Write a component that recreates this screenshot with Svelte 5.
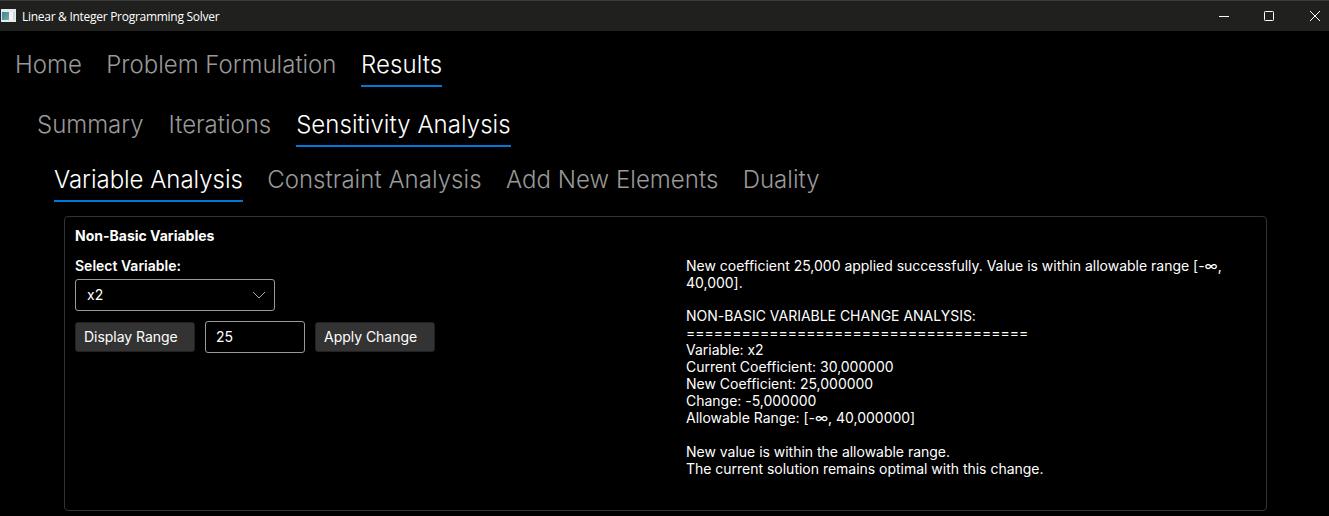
<script>
  const main = ['Home', 'Problem Formulation', 'Results'];
  const sub = ['Summary', 'Iterations', 'Sensitivity Analysis'];
  const third = ['Variable Analysis', 'Constraint Analysis', 'Add New Elements', 'Duality'];
  const rows = [
    { items: main, active: 2, cls: 'r1' },
    { items: sub, active: 2, cls: 'r2' },
    { items: third, active: 0, cls: 'r3' }
  ];
  const message = 'New coefficient 25,000 applied successfully. Value is within allowable range [-∞, 40,000].';
  const report = `NON-BASIC VARIABLE CHANGE ANALYSIS:
=====================================
Variable: x2
Current Coefficient: 30,000000
New Coefficient: 25,000000
Change: -5,000000
Allowable Range: [-∞, 40,000000]

New value is within the allowable range.
The current solution remains optimal with this change.`;
</script>

<div class="window">
  <header>
    <svg class="logo" width="15" height="13" viewBox="0 0 15 13">
      <defs>
        <linearGradient id="pane" x1="0" y1="0" x2="1" y2="1">
          <stop offset="0" stop-color="#3f7fb0" />
          <stop offset="1" stop-color="#6fb58a" />
        </linearGradient>
      </defs>
      <rect width="15" height="13" fill="#e6eaed" />
      <rect x="1" y="3" width="7" height="8" fill="url(#pane)" />
      <rect x="8" y="3" width="4" height="8" fill="#f3f3f3" />
      <rect x="12" y="3" width="2" height="8" fill="#d4d8dc" />
    </svg>
    <span>Linear &amp; Integer Programming Solver</span>
    <svg class="controls" width="110" height="30" viewBox="0 0 110 30" fill="none" stroke="#fff">
      <path d="M0 15.5H10" />
      <rect x="45.5" y="10.5" width="9" height="9" rx="0.8" />
      <path d="M91 10L101 20M101 10L91 20" />
    </svg>
  </header>
  {#each rows as row}
    <nav class={row.cls}>
      {#each row.items as item, i}
        <span class="tab" class:active={i === row.active}>{item}</span>
      {/each}
    </nav>
  {/each}
  <main>
    <section class="form">
      <h2>Non-Basic Variables</h2>
      <div class="label">Select Variable:</div>
      <div class="select">x2
        <svg width="14" height="8" viewBox="0 0 14 8" fill="none" stroke="#aaa"><path d="M1 1L7 7L13 1" /></svg>
      </div>
      <div class="actions">
        <button>Display Range</button>
        <div class="input">25</div>
        <button>Apply Change</button>
      </div>
    </section>
    <section class="output">
      <p>{message}</p>
      <p>{report}</p>
    </section>
  </main>
</div>

<style>
  :global(body) { margin: 0; background: #000; }
  .window { width: 1329px; height: 516px; background: #000; color: #fff; font-family: Inter, sans-serif; font-size: 14px; overflow: hidden; box-sizing: border-box; }
  header { height: 31px; background: #20201e; border-top: 1px solid #3c3c3c; box-sizing: border-box; display: flex; align-items: center; font: 12px "Open Sans", sans-serif; letter-spacing: -0.28px; }
  .logo { margin: 0 6px 2px 1px; }
  .controls { margin: 0 0 1px auto; }
  nav { display: flex; gap: 24.5px; font-size: 24px; font-weight: 300; line-height: 29px; }
  .tab { color: #999; padding-bottom: 6px; border-bottom: 2px solid transparent; white-space: nowrap; }
  .active { color: #fff; border-color: #0078d7; }
  .r1 { padding: 19px 0 0 15px; letter-spacing: -0.015px; }
  .r1 .active { letter-spacing: 0.1px; }
  .r2 { padding: 23px 0 0 37px; gap: 25px; letter-spacing: -0.03px; }
  .r2 .active { letter-spacing: 0.05px; }
  .r3 { padding: 18px 0 0 54px; gap: 24.3px; letter-spacing: 0.04px; }
  .r3 .active { letter-spacing: -0.03px; }
  main { margin: 14px 0 0 64px; width: 1203px; height: 295px; box-sizing: border-box; border: 1px solid #333; border-radius: 4px; display: flex; }
  .form { width: 611px; padding: 10px; box-sizing: border-box; }
  h2 { margin: 0; font-size: 14px; line-height: 17px; font-weight: 700; }
  .label { margin-top: 13px; line-height: 17px; font-weight: 600; }
  .select { margin-top: 5px; width: 200px; height: 32px; box-sizing: border-box; border: 1px solid #999; border-radius: 3px; padding: 0 8px 1px 11px; display: flex; justify-content: space-between; align-items: center; }
  .actions { display: flex; gap: 10px; margin-top: 10px; align-items: center; }
  button { width: 120px; height: 30px; padding: 0 0 2px 8px; background: #333; border: 1px solid #222; border-radius: 3px; color: #fff; font: 14px Inter, sans-serif; letter-spacing: -0.03px; text-align: left; box-sizing: border-box; }
  .input { width: 100px; height: 32px; line-height: 30px; box-sizing: border-box; border: 1px solid #999; border-radius: 3px; padding-left: 10px; }
  .output { width: 565px; margin: 40px 0 0 10px; line-height: 17px; letter-spacing: -0.015px; }
  .output p { margin: 0 0 16px; white-space: pre-wrap; }
</style>
